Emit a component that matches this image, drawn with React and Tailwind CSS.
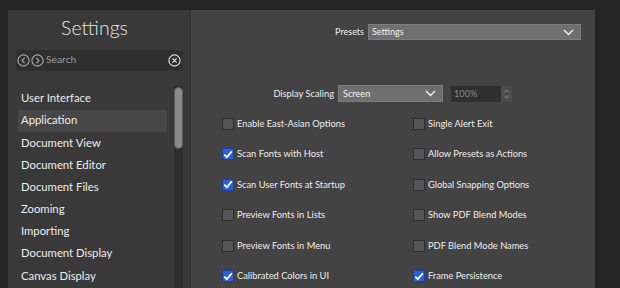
import React from "react";

const menu = [
  "User Interface",
  "Application",
  "Document View",
  "Document Editor",
  "Document Files",
  "Zooming",
  "Importing",
  "Document Display",
  "Canvas Display",
];

const options = [
  ["Enable East-Asian Options", false, "Single Alert Exit", false],
  ["Scan Fonts with Host", true, "Allow Presets as Actions", false],
  ["Scan User Fonts at Startup", true, "Global Snapping Options", false],
  ["Preview Fonts in Lists", false, "Show PDF Blend Modes", false],
  ["Preview Fonts in Menu", false, "PDF Blend Mode Names", false],
  ["Calibrated Colors in UI", true, "Frame Persistence", true],
];

function Chevron() {
  return (
    <svg width="11" height="7" viewBox="0 0 11 7" fill="none">
      <path d="M1 1l4.5 4.5L10 1" stroke="#f0f0f0" strokeWidth="1.4" />
    </svg>
  );
}

function CircleArrow({ dir }) {
  return (
    <svg width="13" height="13" viewBox="0 0 13 13" fill="none">
      <circle cx="6.5" cy="6.5" r="5.6" stroke="#a8a8a8" strokeWidth="1.1" />
      {dir === "left" ? (
        <path d="M7.6 3.8L5 6.5l2.6 2.7" stroke="#a8a8a8" strokeWidth="1.1" />
      ) : (
        <path d="M5.4 3.8L8 6.5 5.4 9.2" stroke="#a8a8a8" strokeWidth="1.1" />
      )}
    </svg>
  );
}

function Check({ label, checked }) {
  return (
    <div className="flex items-center gap-[3px] h-[13px]">
      {checked ? (
        <div className="w-[12px] h-[12px] bg-[#2c5fd8] border border-[#1d3f96] flex items-center justify-center">
          <svg width="10" height="9" viewBox="0 0 10 9" fill="none">
            <path d="M1.3 4.6l2.5 2.6L8.8 1.4" stroke="#ffffff" strokeWidth="1.8" />
          </svg>
        </div>
      ) : (
        <div className="w-[12px] h-[12px] bg-[#555555] border border-[#2e2e2e]" />
      )}
      <span className="text-[9.3px] text-[#ededed] leading-none whitespace-nowrap">{label}</span>
    </div>
  );
}

export default function App() {
  return (
    <div
      className="w-[620px] h-[288px] bg-[#252525] overflow-hidden flex pt-[10px] pl-[8px]"
      style={{ fontFamily: 'Lato, "Noto Sans", sans-serif' }}
    >
      {/* Sidebar */}
      <div className="w-[182px] bg-[#393939] flex flex-col shrink-0">
        <h1 className="text-[19.5px] font-light text-[#e8e8e8] text-center leading-none mt-[8px] mb-[12px] pr-[9px]">
          Settings
        </h1>
        <div className="ml-[8px] w-[167px] h-[21px] bg-[#2f2f2f] rounded-[2px] flex items-center pl-[1px] pr-[2px]">
          <CircleArrow dir="left" />
          <span className="ml-[1px] flex"><CircleArrow dir="right" /></span>
          <span className="ml-[2px] text-[10.3px] text-[#9a9a9a]">Search</span>
          <span className="ml-auto flex">
            <svg width="13" height="13" viewBox="0 0 13 13" fill="none">
              <circle cx="6.5" cy="6.5" r="5.6" stroke="#e0e0e0" strokeWidth="1.1" />
              <path d="M4.4 4.4l4.2 4.2M8.6 4.4L4.4 8.6" stroke="#e0e0e0" strokeWidth="1.2" />
            </svg>
          </span>
        </div>
        <div className="flex flex-1 mt-[15px]">
          <ul className="w-[149px] ml-[10px] pt-[2px]">
            {menu.map((m) => (
              <li
                key={m}
                className={`h-[22.2px] flex items-center pl-[3px] text-[11.3px] text-[#ececec] ${
                  m === "Application" ? "bg-[#474747]" : ""
                }`}
              >
                {m}
              </li>
            ))}
          </ul>
          <div className="w-[9px] bg-[#2d2d2d] ml-[7px] pt-[1px]">
            <div className="h-[62px] bg-[#8a8a8a] rounded-full border border-[#5a5a5a]" />
          </div>
        </div>
      </div>

      {/* Main panel */}
      <div className="w-[405px] bg-[#434343] border-l border-[#333333] shrink-0 flex flex-col">
        <div className="flex items-center justify-end pr-[14px] mt-[14px]">
          <span className="text-[9px] text-[#ececec] mr-[4px]">Presets</span>
          <div className="w-[213px] h-[16px] bg-[#6f6f6f] border border-[#7c7c7c] flex items-center pl-[3px] pr-[6px]">
            <span className="text-[9px] text-[#f2f2f2]">Settings</span>
            <span className="ml-auto flex"><Chevron /></span>
          </div>
        </div>

        <div className="flex items-center justify-end pr-[83px] mt-[45px]">
          <span className="text-[9.3px] text-[#ececec] mr-[4px]">Display Scaling</span>
          <div className="w-[105px] h-[17px] bg-[#6f6f6f] border border-[#7c7c7c] flex items-center pl-[4px] pr-[6px]">
            <span className="text-[9.2px] text-[#f2f2f2]">Screen</span>
            <span className="ml-auto flex"><Chevron /></span>
          </div>
          <div className="ml-[8px] w-[50px] h-[16px] bg-[#2f2f2f] flex items-center pl-[3px]">
            <span className="text-[9.2px] text-[#8a8a8a]">100%</span>
          </div>
          <div className="w-[11px] h-[16px] bg-[#4c4c4c] flex items-center justify-center">
            <svg width="7" height="12" viewBox="0 0 7 12" fill="none">
              <path d="M1 4.5l2.5-2.5L6 4.5M1 7.5L3.5 10 6 7.5" stroke="#8a8a8a" strokeWidth="1" />
            </svg>
          </div>
        </div>

        <div className="grid grid-cols-[191px_1fr] pl-[31px] mt-[15px] gap-y-[17.5px]">
          {options.map(([a, ac, b, bc]) => (
            <React.Fragment key={a}>
              <Check label={a} checked={ac} />
              <Check label={b} checked={bc} />
            </React.Fragment>
          ))}
        </div>
      </div>
    </div>
  );
}
